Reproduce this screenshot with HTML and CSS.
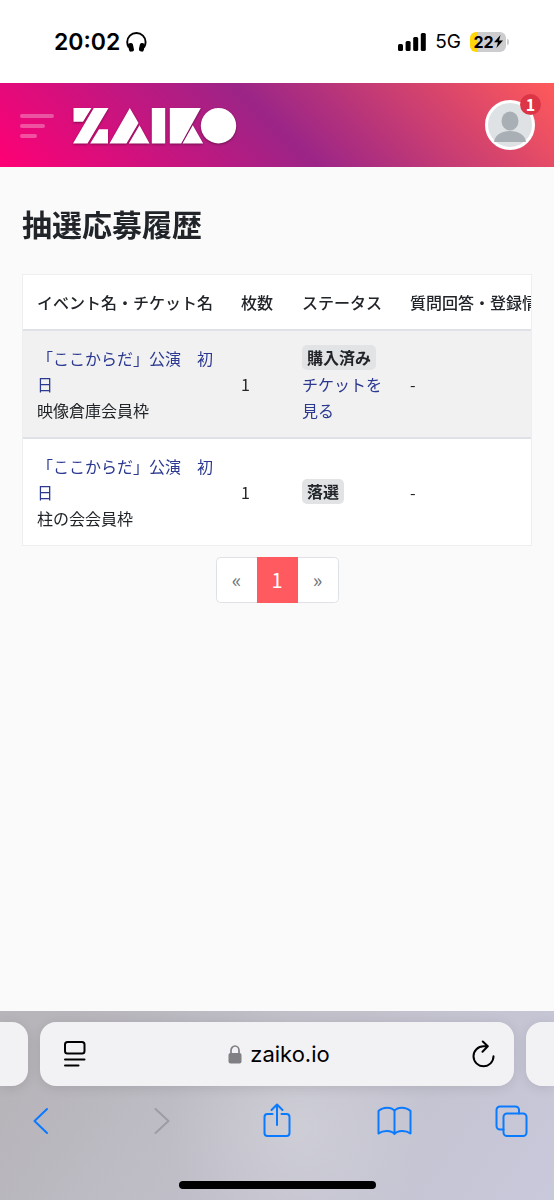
FILE: index.html
```html
<!DOCTYPE html>
<html lang="ja">
<head>
<meta charset="utf-8">
<meta name="viewport" content="width=device-width, initial-scale=1">
<title>抽選応募履歴</title>
<link rel="stylesheet" href="styles.css">
</head>
<body>
<div class="status-bar">
  <div class="status-left">
    <span class="clock">20:02</span>
    <svg class="headphones" width="21" height="20" viewBox="0 0 21 20" aria-hidden="true">
      <path d="M2.800 15.500C1.600 13.500 1.200 12 1.200 10a9.200 9 0 0 1 18.400 0c0 2-.4 3.500-1.600 5.500" fill="none" stroke="#000" stroke-width="1.900"/>
      <rect x="2.400" y="11" width="5" height="8.600" rx="2" transform="rotate(-12 5 15)"/>
      <rect x="13.400" y="11" width="5" height="8.600" rx="2" transform="rotate(12 16 15)"/>
    </svg>
  </div>
  <div class="status-right">
    <svg width="28" height="18" viewBox="0 0 28 18" aria-hidden="true">
      <rect x="0" y="11" width="5" height="7" rx="1.500"/><rect x="7.600" y="8" width="5" height="10" rx="1.500"/>
      <rect x="15.200" y="4" width="5" height="14" rx="1.500"/><rect x="22.800" y="0" width="5" height="18" rx="1.500"/>
    </svg>
    <span class="network">5G</span>
    <span class="battery"><span>22</span><svg width="9" height="13" viewBox="0 0 9 13" aria-hidden="true"><path d="M6.500 0 0 7.300h4L2.400 13 9 5.600H5z"/></svg></span>
  </div>
</div>

<header class="site-header">
  <button class="menu-button" type="button" aria-label="メニュー"><span></span><span></span><span></span></button>
  <a class="brand" href="#" aria-label="ZAIKO">
    <svg width="164" height="38" viewBox="0 0 164 38" aria-hidden="true">
      <path d="M.5 0H18.500L10 13.700H.5zM20.800 0H35.500L14.500 35.400H0zM26 21.300h9v14.100H17.200zM56.800 0l8.700 15-12 20.400h-17zM66.500 17.300l10 18.100H55.800zM78.800 0h13.400v35.400H78.800zM96.800 0h31L108.200 35.400H96.800zM119.800 17.300l10.400 18.100h-20.700z" fill="#fff"/>
      <circle cx="145.500" cy="17.700" r="17.700" fill="#fff"/>
    </svg>
  </a>
  <button class="account" type="button" aria-label="アカウント">
    <svg width="50" height="50" viewBox="0 0 50 50" aria-hidden="true">
      <circle cx="25" cy="25" r="23.500" fill="#dfe2e4" stroke="#fff" stroke-width="3"/>
      <ellipse cx="25" cy="21" rx="8.500" ry="9.500" fill="#a9b0b5"/>
      <path d="M9 42c1-7 7-11 16-11s15 4 16 11z" fill="#a9b0b5"/>
    </svg>
    <span class="count">1</span>
  </button>
</header>

<main class="content">
  <h1>抽選応募履歴</h1>
  <div class="table-scroll">
    <table>
      <colgroup><col class="col-event"><col class="col-count"><col class="col-status"><col class="col-info"></colgroup>
      <thead>
        <tr><th scope="col">イベント名・チケット名</th><th scope="col">枚数</th><th scope="col">ステータス</th><th scope="col">質問回答・登録情報</th></tr>
      </thead>
      <tbody>
        <tr>
          <td><a href="#">「ここからだ」公演　初日</a><br>映像倉庫会員枠</td>
          <td>1</td>
          <td><span class="badge">購入済み</span><br><a href="#">チケットを見る</a></td>
          <td>-</td>
        </tr>
        <tr>
          <td><a href="#">「ここからだ」公演　初日</a><br>柱の会会員枠</td>
          <td>1</td>
          <td><span class="badge">落選</span></td>
          <td>-</td>
        </tr>
      </tbody>
    </table>
  </div>
  <nav class="pagination" aria-label="ページ">
    <a href="#" aria-label="前へ">«</a><a class="current" href="#" aria-current="page">1</a><a href="#" aria-label="次へ">»</a>
  </nav>
</main>

<footer class="browser">
  <div class="tabs">
    <div class="tab tab-prev"></div>
    <div class="tab address">
      <button type="button" aria-label="ページ設定">
        <svg width="24" height="28" viewBox="0 0 24 28" aria-hidden="true"><g fill="none" stroke="#000" stroke-width="2" stroke-linecap="round"><rect x="2" y="2" width="19.500" height="11.500" rx="2.500"/><path d="M2 19.500h19.500M2 25.500h13.500"/></g></svg>
      </button>
      <span class="host">
        <svg width="14" height="19" viewBox="0 0 14 19" aria-hidden="true"><path d="M3 9V5.500a4 4.500 0 0 1 8 0V9" fill="none" stroke="#808084" stroke-width="1.700"/><rect x=".5" y="8" width="13" height="10.500" rx="2" fill="#808084"/></svg>
        zaiko.io
      </span>
      <button type="button" aria-label="再読み込み">
        <svg width="24" height="28" viewBox="0 0 24 28" aria-hidden="true"><path d="M16.500 6.300H12.500a10 10 0 1 0 10 10M11.800 1.500l5 4.800-5.300 5.400" fill="none" stroke="#000" stroke-width="2" stroke-linecap="round" stroke-linejoin="round"/></svg>
      </button>
    </div>
    <div class="tab tab-next"></div>
  </div>
  <div class="tools">
    <button type="button" aria-label="戻る"><svg width="36" height="36" viewBox="0 0 36 36"><path d="M24 6 11.500 18 24 30"/></svg></button>
    <button type="button" aria-label="進む" disabled><svg width="36" height="36" viewBox="0 0 36 36"><path d="M14.500 6 27.500 18l-13 12"/></svg></button>
    <button type="button" aria-label="共有"><svg width="36" height="36" viewBox="0 0 36 36"><path d="M14.500 11h-5a3 3 0 0 0-3 3v16a3 3 0 0 0 3 3h19a3 3 0 0 0 3-3V14a3 3 0 0 0-3-3h-5M19 22V2M13.500 7 19 1.500 24.500 7"/></svg></button>
    <button type="button" aria-label="ブックマーク"><svg width="36" height="36" viewBox="0 0 36 36"><path d="M18.500 8C16 3.500 7 3.500 2.500 8v22.500c4.500-3.500 13-3.500 16 .5 3-4 11.500-4 16-.5V8c-4.500-4.500-13.500-4.500-16 0zM18.500 8v23"/></svg></button>
    <button type="button" aria-label="タブ一覧"><svg width="36" height="36" viewBox="0 0 36 36"><path d="M10.500 26.500H7a3.500 3.500 0 0 1-3.500-3.500V7A3.500 3.500 0 0 1 7 3.500h15.500A3.500 3.500 0 0 1 26 7v3.500"/><rect x="10.500" y="10.500" width="23" height="22.500" rx="3.500"/></svg></button>
  </div>
  <div class="home-indicator"></div>
</footer>
</body>
</html>
```

FILE: styles.css
```css
* { box-sizing: border-box; }

body {
  margin: 0;
  min-height: 100vh;
  display: flex;
  flex-direction: column;
  background: #fafafa;
  color: #212529;
  font: 16px/26px "Noto Sans CJK JP", sans-serif;
}

button {
  display: flex;
  padding: 0;
  border: 0;
  background: none;
  font: inherit;
  color: inherit;
}

a { color: #2b3990; text-decoration: none; }

.status-bar {
  display: flex;
  align-items: center;
  justify-content: space-between;
  height: 83px;
  padding: 0 48px 0 54px;
  background: #fff;
  color: #000;
  font-family: Inter, sans-serif;
}
.status-left, .status-right { display: flex; align-items: center; }
.status-left { gap: 6px; }
.status-right { gap: 9px; }
.clock { font-size: 23px; font-weight: 600; }
.network { font-size: 19px; }
.battery {
  position: relative;
  display: flex;
  align-items: center;
  justify-content: center;
  width: 36px;
  height: 20px;
  border-radius: 6px;
  background: linear-gradient(90deg, #ffd60a 8px, #cdcdcf 8px);
  font-size: 16px;
  font-weight: 700;
}
.battery::after {
  content: "";
  position: absolute;
  right: -3px;
  top: 7px;
  width: 2px;
  height: 6px;
  border-radius: 0 2px 2px 0;
  background: #cdcdcf;
}

.site-header {
  display: flex;
  align-items: center;
  height: 84px;
  padding: 0 19px 0 20px;
  background: linear-gradient(45deg, #ff0075 0%, #9b2587 50%, #ff5a5a 100%);
}
.menu-button { flex-direction: column; gap: 6px; width: 34px; padding-top: 2px; }
.menu-button span {
  width: 34px;
  height: 4px;
  border-radius: 2px;
  background: rgba(255, 255, 255, .3);
}
.menu-button span:nth-child(2) { width: 25px; }
.menu-button span:nth-child(3) { width: 17px; }
.brand { display: flex; margin-left: 19px; padding-top: 3px; }
.brand svg { filter: drop-shadow(0 1px 1px rgba(0, 0, 0, .4)); }
.account { position: relative; margin-left: auto; }
.count {
  position: absolute;
  top: -6px;
  right: -6px;
  width: 21px;
  height: 21px;
  border-radius: 50%;
  background: #dc3545;
  color: #fff;
  font-size: 16px;
  font-weight: 700;
  line-height: 20px;
}

.content { flex: 1; padding: 36px 22px; }
h1 { margin: 0 0 30px; font-size: 30px; line-height: 41px; font-weight: 700; }

.table-scroll {
  overflow-x: auto;
  scrollbar-width: none;
  border: 1px solid #eeeeef;
  background: #fff;
}
table {
  width: 100%;
  min-width: 560px;
  table-layout: fixed;
  border-collapse: separate;
  border-spacing: 0;
}
.col-event { width: 204px; }
.col-count { width: 61px; }
.col-status { width: 108px; }
th, td { padding: 14px; text-align: left; vertical-align: middle; }
th { font-weight: 500; white-space: nowrap; }
td { border-top: 2px solid #dee2e6; }
tbody tr:nth-child(odd) { background: #f1f1f1; }
.badge {
  display: inline-block;
  padding: 0 5px;
  border-radius: 5px;
  background: #e2e3e5;
  font-weight: 700;
  line-height: 25px;
  vertical-align: top;
}

.pagination { display: flex; justify-content: center; margin-top: 11px; }
.pagination a {
  width: 41px;
  border: 1px solid #dee2e6;
  background: #fff;
  color: #6c757d;
  font-size: 20px;
  line-height: 44px;
  text-align: center;
}
.pagination a:first-child { border-right: 0; border-radius: 5px 0 0 5px; }
.pagination a:last-child { border-left: 0; border-radius: 0 5px 5px 0; }
.pagination .current { border-color: #ff5a5f; background: #ff5a5f; color: #fff; }

.browser {
  overflow: hidden;
  padding: 11px 0;
  background:
    radial-gradient(circle at 54% 62%, rgba(214, 214, 222, .6), rgba(214, 214, 222, 0) 130px),
    linear-gradient(125deg, #b7b4ba 10%, #c1c0ca 50%, #c9c9dc 100%);
}
.tabs { display: grid; grid-template-columns: 28px 1fr 28px; gap: 12px; }
.tab {
  height: 64px;
  border-radius: 16px;
  background: #f2f2f5;
  box-shadow: 0 2px 12px rgba(0, 0, 0, .1);
}
.tab-prev { border-radius: 0 16px 16px 0; }
.tab-next { border-radius: 16px 0 0 16px; }
.address {
  display: flex;
  align-items: center;
  justify-content: space-between;
  padding: 0 19px 0 23px;
}
.host {
  display: flex;
  align-items: center;
  gap: 8px;
  color: #000;
  font: 22px/28px Inter, sans-serif;
}
.tools {
  display: flex;
  justify-content: space-between;
  padding: 17px 25px 0 23px;
}
.tools svg {
  fill: none;
  stroke: #0a7aff;
  stroke-width: 2;
  stroke-linecap: round;
  stroke-linejoin: round;
}
.tools button:disabled svg { stroke: #9d9ca5; }
.home-indicator {
  width: 197px;
  height: 8px;
  margin: 42px auto 0;
  border-radius: 4px;
  background: #000;
}
```
